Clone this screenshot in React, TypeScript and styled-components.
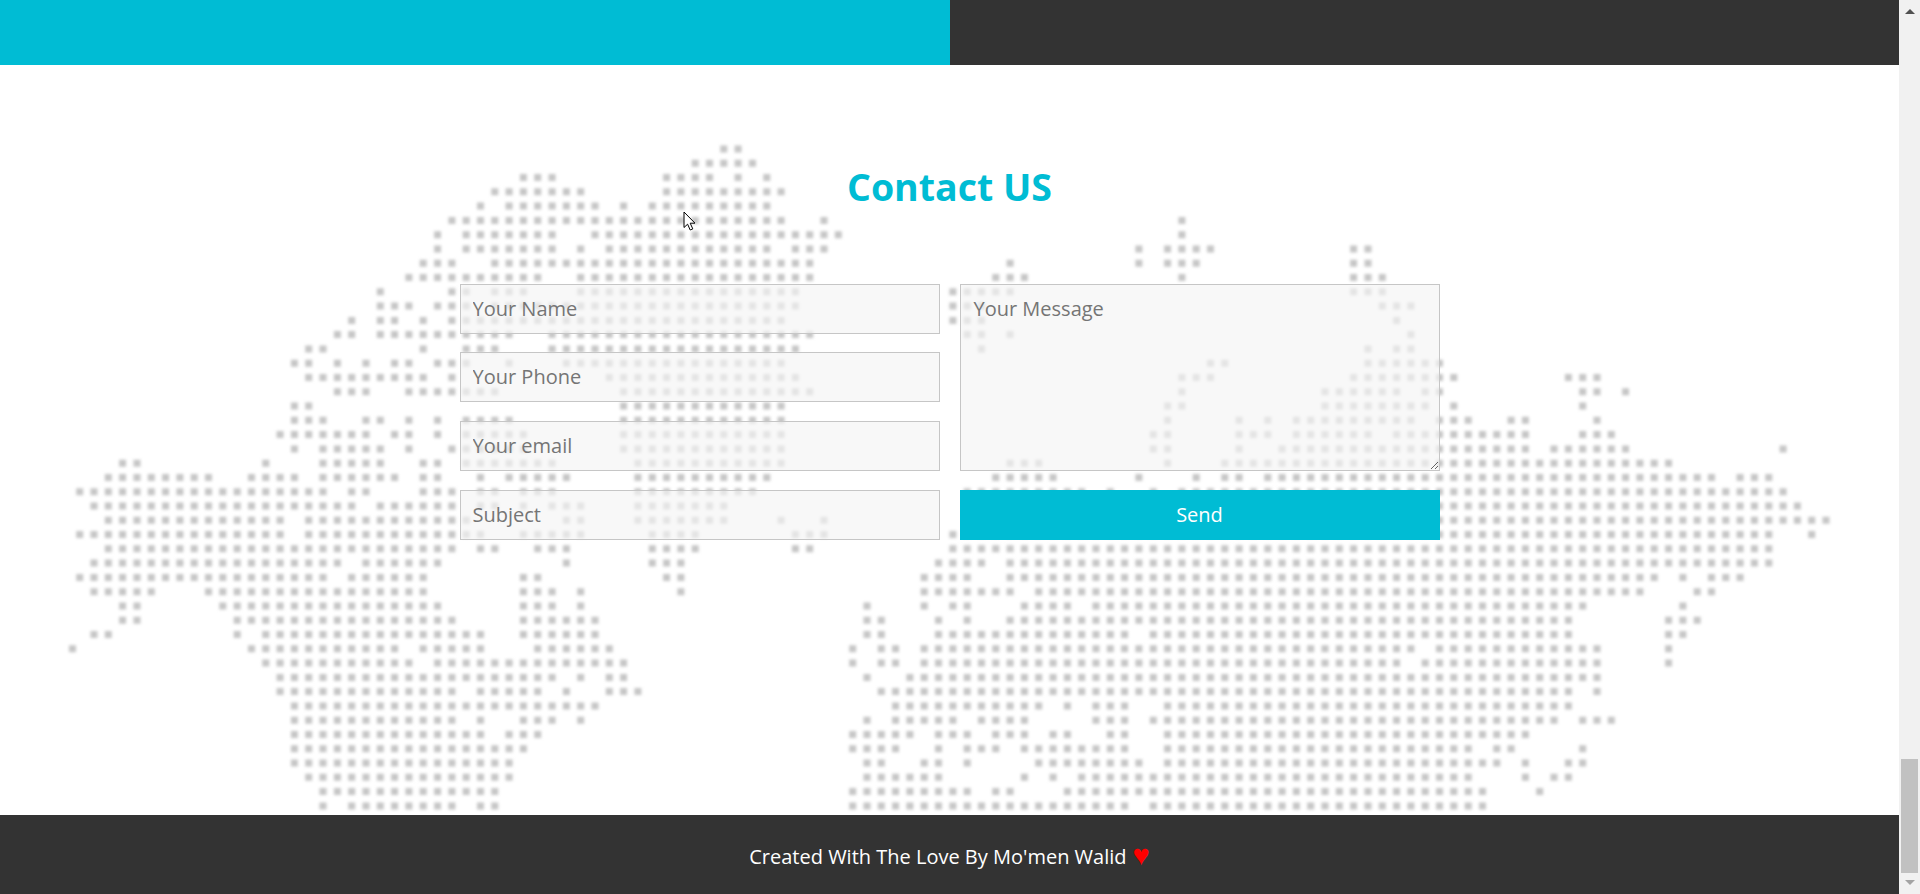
import React, { FC } from "react";
import styled, { createGlobalStyle } from "styled-components";

const Cyan = "#00bcd4";
const Dark = "#333333";

// dot map, one entry per row: the column ranges that hold a dot
const MAP_ROWS: string[] = [
  "45-46",
  "43-47",
  "31-33,41-44,46,48",
  "29-35,41-49",
  "28,30-36,38,40-48",
  "26-49,52,77",
  "25,27-33,36-53,77",
  "25,27-33,35,37-48,50-52,74,76-79,89,90",
  "24-26,29-51,65,74,76-78,89,90",
  "23-32,35-51,64-66,77,89-91",
  "21,26,27,29-31,35-50,61-65,89-91",
  "21-23,25-27,29-50,61-63,91-93",
  "19,21,22,24,26-49,61-63,92",
  "18,19,21-30,33-51,62,63,65,93",
  "16,17,24,27-29,33-50,63,90,92,93",
  "15,16,18,20,22,23,25-27,30,34-49,79,80,90-95",
  "16-24,26,37-50,77-79,89-96,104-106",
  "18-20,23-29,38-51,77,87-92,94,95,105,106,108",
  "15,16,38-49,76,77,87-94,96,105",
  "15-17,20,21,23,25,27-30,38-49,76,81,83,85-93,95-97,100,101,106",
  "14-20,22,23,25,27-31,38-49,75,76,81-83,85-90,92-101,105-107",
  "15,17-21,23,26-31,38-49,75,76,81,84-101,103-108,119",
  "3,4,13,17-21,24,25,27-33,39-49,65-67,76,80-111",
  "2-9,12-15,17-22,24,25,28,30-34,39-48,64-68,74,78,80,81,83-114,116-118",
  "0-17,19,20,24-26,28,29,31-33,39-47,62-70,72,75,77-119",
  "1-19,21-26,28,29,31,33-35,39-45,62-120",
  "2-14,16-27,34,35,39-45,49,52,62-122",
  "0-14,16-28,31-35,40-43,50-52,61-118,121",
  "2-26,28,29,32-34,40-43,50,51,61-118",
  "1-18,20-25,34,40-42,60-63,65-118",
  "0-17,19-24,31,32,41,42,59-62,65-110,112,114-116",
  "1-5,9-24,31-33,35,42,59-65,67-109,113,114",
  "3,4,10-25,31-33,35,55,59,61,62,66-69,71-105,112",
  "3,4,11-26,31-36,55,56,60,62,65-104,111-113",
  "1,2,11,13-28,31-36,55,56,60-73,75-104,111,112",
  "12-22,24-28,32-37,54,56,57,59-93,95-106,111",
  "13-23,25-38,54,56,57,59-92,94-106,111",
  "14-33,35,37,38,55,58-106",
  "14-26,28-32,34,37-39,56-104,106",
  "15-36,57-67,69,71-73,76-104",
  "15-26,28,31-33,35,55,57-61,63-66,71-73,75-103,105-107",
  "15-28,30-32,54-58,60-62,64-66,68,69,72,73,76-101",
  "15-31,54-57,60,62-64,66-73,76-97,99,100,105",
  "15-30,55,56,59,60,62,67-74,76-99,101,104,105",
  "16-30,55-60,66,68,70-97,101,103,104",
  "17-29,54-62,64,65,69-98,102",
  "17,19-26,28,29,54-73,75-98",
];

const PITCH_X = 14.314;
const PITCH_Y = 14.28;
const ORIGIN_X = 79.7;
const ORIGIN_Y = 84;
const DOT = 7;

const dot = (col: number, row: number) =>
  `M${(ORIGIN_X + col * PITCH_X - DOT / 2).toFixed(1)} ${(ORIGIN_Y + row * PITCH_Y - DOT / 2).toFixed(1)}h${DOT}v${DOT}h-${DOT}z`;

const buildMapPath = () => {
  const parts: string[] = [dot(-0.5, 35)];
  MAP_ROWS.forEach((line, row) => {
    line.split(",").forEach(range => {
      const [from, to = from] = range.split("-").map(Number);
      for (let col = from; col <= to; col++) parts.push(dot(col, row));
    });
  });
  return parts.join("");
};

const DotMap: FC = () => (
  <MapSvg viewBox="0 0 1899 750" aria-hidden="true">
    <defs>
      <filter id="soft" x="-1%" y="-1%" width="102%" height="102%" colorInterpolationFilters="sRGB">
        <feGaussianBlur stdDeviation="1.4" />
      </filter>
    </defs>
    <path d={buildMapPath()} fill="#c6c6c6" filter="url(#soft)" />
  </MapSvg>
);

const Cursor: FC = () => (
  <CursorSvg viewBox="0 0 12 20" aria-hidden="true">
    <path
      d="M1 1v15.5l3.6-3.3 2.6 5.8 2.6-1.1-2.6-5.7h4.8z"
      fill="#fff"
      stroke="#000"
      strokeWidth="1"
      strokeLinejoin="miter"
    />
  </CursorSvg>
);

const App: FC = () => {
  return (
    <Page>
      <GlobalStyle />
      <Main>
        <TopBar>
          <TopBarAccent />
          <TopBarRest />
        </TopBar>
        <ContactSection>
          <DotMap />
          <Title>Contact US</Title>
          <ContactForm onSubmit={e => e.preventDefault()}>
            <FieldColumn>
              <Field type="text" placeholder="Your Name" />
              <Field type="text" placeholder="Your Phone" />
              <Field type="email" placeholder="Your email" />
              <Field type="text" placeholder="Subject" />
            </FieldColumn>
            <MessageColumn>
              <Message placeholder="Your Message" />
              <SendButton type="submit">Send</SendButton>
            </MessageColumn>
          </ContactForm>
          <Cursor />
        </ContactSection>
        <Footer>
          <span>Created With The Love By Mo'men Walid</span>
          <Heart>♥</Heart>
        </Footer>
      </Main>
      <ScrollTrack>
        <ArrowUp />
        <ScrollThumb />
        <ArrowDown />
      </ScrollTrack>
    </Page>
  );
};

export default App;

const GlobalStyle = createGlobalStyle`
  html, body {
    margin: 0;
    height: 100%;
    overflow: hidden;
    background: #fff;
  }
  * {
    box-sizing: border-box;
  }
  body, input, textarea, button {
    font-family: "Open Sans", "Noto Sans", sans-serif;
  }
`;

const Page = styled.div`
  display: flex;
  height: 894px;
`;

const Main = styled.div`
  flex: 1;
  min-width: 0;
  display: flex;
  flex-direction: column;
`;

const TopBar = styled.div`
  display: flex;
  height: 65px;
`;

const TopBarAccent = styled.div`
  flex: 1;
  background-color: ${Cyan};
`;

const TopBarRest = styled.div`
  flex: 1;
  background-color: ${Dark};
`;

const ContactSection = styled.section`
  position: relative;
  flex: 1;
  padding-top: 97px;
`;

const MapSvg = styled.svg`
  position: absolute;
  top: 0;
  left: 0;
  width: 1899px;
  height: 750px;
`;

const CursorSvg = styled.svg`
  position: absolute;
  top: 146px;
  left: 683px;
  width: 12px;
  height: 20px;
  z-index: 2;
`;

const Title = styled.h2`
  position: relative;
  margin: 0 0 72px;
  font-size: 37.5px;
  font-weight: 700;
  line-height: 50px;
  text-align: center;
  color: ${Cyan};
`;

const ContactForm = styled.form`
  position: relative;
  width: 980px;
  height: 256px;
  margin: 0 auto;
  display: grid;
  grid-template-columns: 480px 480px;
  column-gap: 20px;
`;

const FieldColumn = styled.div`
  display: flex;
  flex-direction: column;
  gap: 19px;
`;

const Field = styled.input`
  height: 50px;
  padding: 0 12px 1px;
  font-size: 20px;
  color: #555;
  background-color: rgba(245, 245, 245, 0.65);
  border: 1px solid #c6c6c6;
  outline: none;
  &:first-child {
    margin-bottom: -1px;
  }
  &::placeholder {
    color: #757575;
    opacity: 1;
  }
`;

const MessageColumn = styled.div`
  display: flex;
  flex-direction: column;
  gap: 19px;
`;

const Message = styled.textarea`
  flex: 1;
  padding: 10px 13px;
  font-size: 20px;
  color: #555;
  background-color: rgba(245, 245, 245, 0.65);
  border: 1px solid #c6c6c6;
  outline: none;
  &::placeholder {
    color: #757575;
    opacity: 1;
  }
`;

const SendButton = styled.button`
  height: 50px;
  padding: 0 0 2px;
  font-size: 20px;
  color: #fff;
  background-color: ${Cyan};
  border: none;
`;

const Footer = styled.footer`
  height: 79px;
  padding-top: 3px;
  display: flex;
  align-items: center;
  justify-content: center;
  gap: 6px;
  font-size: 20px;
  color: #fff;
  background-color: ${Dark};
`;

const Heart = styled.span`
  margin-top: -6px;
  font-size: 29px;
  line-height: 1;
  color: #f00;
`;

const ScrollTrack = styled.div`
  width: 21px;
  padding: 9px 2px;
  display: flex;
  flex-direction: column;
  align-items: center;
  background-color: #f1f1f1;
`;

const ScrollThumb = styled.div`
  width: 17px;
  height: 114px;
  margin-top: auto;
  margin-bottom: 7px;
  background-color: #c1c1c1;
`;

const ArrowUp = styled.div`
  width: 0;
  height: 0;
  border-left: 5px solid transparent;
  border-right: 5px solid transparent;
  border-bottom: 5px solid #505050;
`;

const ArrowDown = styled.div`
  width: 0;
  height: 0;
  border-left: 5px solid transparent;
  border-right: 5px solid transparent;
  border-top: 5px solid #a3a3a3;
`;
